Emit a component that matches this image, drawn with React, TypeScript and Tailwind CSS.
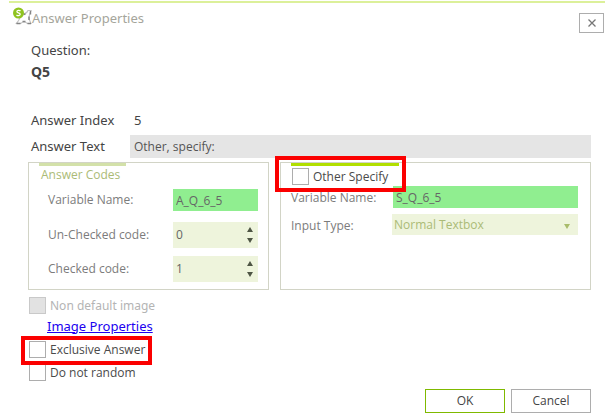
import React from "react";

type CheckProps = { id: string; label: string; disabled?: boolean };

function Check({ id, label, disabled }: CheckProps) {
  return (
    <div className="flex h-[17px] items-center gap-1">
      <input
        id={id}
        type="checkbox"
        disabled={disabled}
        className="size-[17px] shrink-0 appearance-none border border-[#adadad] bg-white checked:bg-[#b1df00] disabled:border-[#c9c9c9] disabled:bg-[#e2e2e2]"
      />
      <label
        htmlFor={id}
        className={
          disabled
            ? "whitespace-nowrap font-['Noto_Sans',sans-serif] text-[12px] leading-[17px] text-[#b4b4b4]"
            : "whitespace-nowrap text-[12px] leading-[17px] text-[#4a4a4a]"
        }
      >
        {label}
      </label>
    </div>
  );
}

function Spinner({ id, label, value }: { id: string; label: string; value: string }) {
  return (
    <div className="flex h-[26px] items-center">
      <label htmlFor={id} className="w-[125px] shrink-0 text-[12px] text-[#7c7c7c]">
        {label}
      </label>
      <div className="flex h-full min-w-0 flex-1 bg-[#eef4dc]">
        <input
          id={id}
          defaultValue={value}
          className="min-w-0 flex-1 bg-transparent pl-[3px] text-[12px] text-[#666] outline-none"
        />
        <div className="flex w-4 flex-col items-center justify-center gap-[6px]">
          <button type="button" aria-label={"Increase " + label}>
            <svg className="block" width="6" height="5" viewBox="0 0 6 5">
              <path d="M3 0 6 5H0Z" fill="#4e5544" />
            </svg>
          </button>
          <button type="button" aria-label={"Decrease " + label}>
            <svg className="block" width="6" height="5" viewBox="0 0 6 5">
              <path d="M0 0H6L3 5Z" fill="#4e5544" />
            </svg>
          </button>
        </div>
      </div>
    </div>
  );
}

function AppIcon() {
  return (
    <svg width="19" height="18" viewBox="0 0 19 18" aria-hidden="true">
      <path
        d="M10.500 6.500Q13.500 7 15 3.500L18 3.500Q16 8 16 10.500T18 16.500H14.500Q11 13.500 7.500 16.500H3.500Q6.500 13 7 10"
        fill="#fff"
        stroke="#c2c2c2"
        strokeWidth="1.200"
      />
      <path d="M17.500 4v3.500M16 9.500v3.500M14.500 16.500h3.500M3.500 16.500h4M9.500 14.500h3M10.500 7.500l2-.5" fill="none" stroke="#858585" strokeWidth="1.400" />
      <circle cx="5.500" cy="6" r="5.500" fill="#8fc31f" />
      <path d="M7.500 4C6.500 3 3.800 3.200 3.900 4.700 4 6.200 7.300 5.500 7.200 7.300 7.100 9 4.600 9 3.500 8" fill="none" stroke="#fff" strokeWidth="1.300" />
    </svg>
  );
}

export default function App() {
  return (
    <main className="w-full bg-white pb-1 font-['Open_Sans','Noto_Sans',sans-serif] text-[#444]">
      <div className="pt-[1px] pr-[6px] pl-[9px]">
        <div className="h-[2px] bg-[#dcf09a]" />
      </div>
      <header className="flex h-[30px] items-start justify-between pr-[7px] pl-[13px] pt-1">
        <div className="flex">
          <AppIcon />
          <h1 className="pt-[2px] font-['Noto_Sans',sans-serif] text-[13px] leading-[18px] text-[#a5a59b]">Answer Properties</h1>
        </div>
        <button type="button" aria-label="Close" className="mt-[6px] flex h-5 w-[25px] items-center justify-center border border-[#adadad]">
          <svg width="8" height="8" viewBox="0 0 8 8">
            <path d="M0.500 0.500 7.500 7.500M7.500 0.500 0.500 7.500" stroke="#777" strokeWidth="1.300" />
          </svg>
        </button>
      </header>

      <form className="pr-5 pl-[28px]" onSubmit={(e) => e.preventDefault()}>
        <div className="pt-2 pl-[3px] font-['Noto_Sans',sans-serif] text-[13px] leading-[18px]">
          <p>Question:</p>
          <p className="mt-1 text-[14px] font-bold">Q5</p>
          <p className="mt-[30px] flex">
            <span className="w-[103px]">Answer Index</span>
            <span>5</span>
          </p>
        </div>
        <div className="mt-[6px] flex h-[23px] items-center pl-[3px]">
          <label htmlFor="answer-text" className="w-[99px] shrink-0 font-['Noto_Sans',sans-serif] text-[13px]">
            Answer Text
          </label>
          <input
            id="answer-text"
            defaultValue="Other, specify:"
            className="h-full min-w-0 flex-1 bg-[#e5e5e5] pl-1 text-[12px] text-[#555] outline-none"
          />
        </div>

        <div className="mt-1 grid grid-cols-[minmax(0,241fr)_minmax(0,311fr)] gap-[11px]">
          <section className="border border-[#d2d4c6] pr-[10px] pb-[7px] pl-[10px]">
            <h2 className="w-[87px] border-t-[3px] border-[#d3e1a9] pl-[2px] text-[12px] leading-[17px] whitespace-nowrap text-[#abbb76]">
              Answer Codes
            </h2>
            <div className="flex flex-col gap-2 pt-[6px] pl-[9px]">
              <div className="mb-[3px] flex h-[22px] items-center">
                <label htmlFor="code-name" className="w-[125px] shrink-0 text-[12px] text-[#7c7c7c]">
                  Variable Name:
                </label>
                <input
                  id="code-name"
                  defaultValue="A_Q_6_5"
                  className="h-full min-w-0 flex-1 bg-[#90ee90] pl-[3px] text-[12px] text-[#666] outline-none"
                />
              </div>
              <Spinner id="unchecked" label="Un-Checked code:" value="0" />
              <Spinner id="checked" label="Checked code:" value="1" />
            </div>
          </section>

          <section className="border border-[#d2d4c6] pr-3 pl-[10px]">
            <div className="relative w-[108px] border-t-[3px] border-[#b1df00] pt-[2px] pl-[1px]">
              <Check id="other-specify" label="Other Specify" />
              <div className="pointer-events-none absolute -top-[10px] -left-4 h-9 w-[131px] border-4 border-[#fb0000]" />
            </div>
            <div className="mt-[1px] flex h-[22px] items-center">
              <label htmlFor="specify-name" className="w-[102px] shrink-0 pt-[2px] text-[12px] text-[#7c7c7c]">
                Variable Name:
              </label>
              <input
                id="specify-name"
                defaultValue="S_Q_6_5"
                className="h-full min-w-0 flex-1 bg-[#90ee90] pl-[3px] text-[12px] text-[#666] outline-none"
              />
            </div>
            <div className="mt-[6px] flex h-[21px] items-center">
              <label htmlFor="input-type" className="w-[101px] shrink-0 pt-[2px] text-[12px] text-[#7c7c7c]">
                Input Type:
              </label>
              <div className="relative h-full min-w-0 flex-1">
                <select
                  id="input-type"
                  className="block h-full w-full appearance-none bg-[#eef4dc] pl-[2px] text-[12px] leading-[21px] text-[#abbb76] outline-none"
                >
                  <option>Normal Textbox</option>
                </select>
                <svg className="pointer-events-none absolute top-[10px] right-2" width="6" height="5" viewBox="0 0 6 5">
                  <path d="M0 0H6L3 5Z" fill="#a9bc6b" />
                </svg>
              </div>
            </div>
          </section>
        </div>

        <div className="pt-[7px] pl-[1px]">
          <Check id="non-default" label="Non default image" disabled />
          <a href="#image" className="ml-[18px] flex h-[27px] w-fit items-center pb-[2px] font-['Noto_Sans',sans-serif] text-[13px] text-[#2000f0] underline">
            Image Properties
          </a>
          <div className="relative w-fit">
            <Check id="exclusive" label="Exclusive Answer" />
            <div className="pointer-events-none absolute -top-[5px] -left-2 z-10 h-[29px] w-[131px] border-4 border-[#fb0000]" />
          </div>
          <div className="mt-[6px]">
            <Check id="no-random" label="Do not random" />
          </div>
        </div>

        <footer className="mt-2 flex justify-end gap-[6px] text-[12px]">
          <button type="submit" className="h-6 w-20 border border-[#7fb900]">
            OK
          </button>
          <button type="button" className="h-6 w-20 border border-[#adadad]">
            Cancel
          </button>
        </footer>
      </form>
    </main>
  );
}
